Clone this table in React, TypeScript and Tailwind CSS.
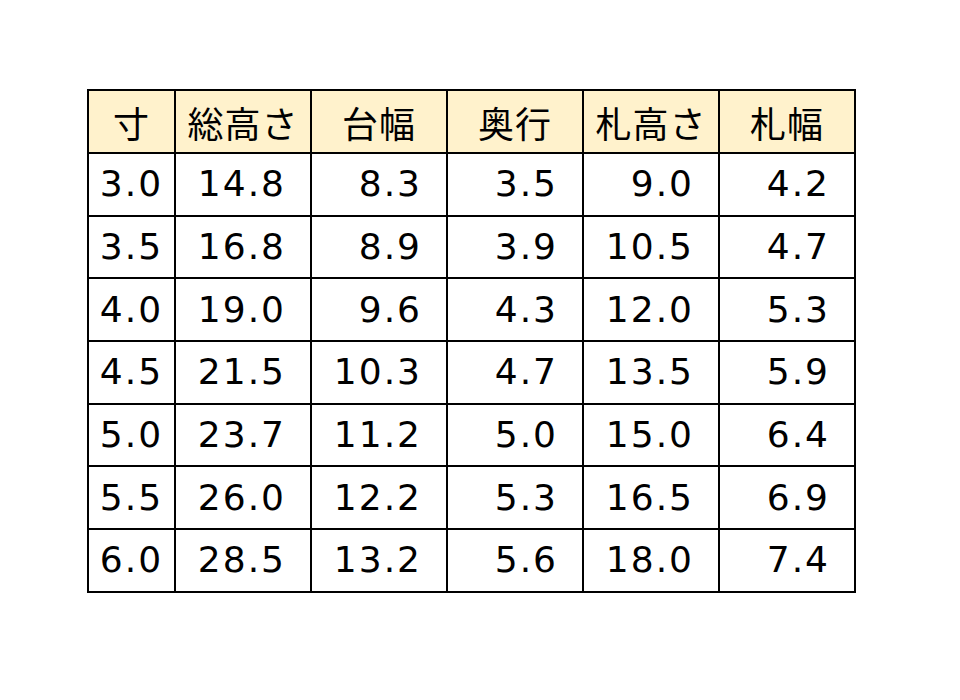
import React from 'react';

const headers = ['寸', '総高さ', '台幅', '奥行', '札高さ', '札幅'];

const rows = [
  ['3.0', '14.8', '8.3', '3.5', '9.0', '4.2'],
  ['3.5', '16.8', '8.9', '3.9', '10.5', '4.7'],
  ['4.0', '19.0', '9.6', '4.3', '12.0', '5.3'],
  ['4.5', '21.5', '10.3', '4.7', '13.5', '5.9'],
  ['5.0', '23.7', '11.2', '5.0', '15.0', '6.4'],
  ['5.5', '26.0', '12.2', '5.3', '16.5', '6.9'],
  ['6.0', '28.5', '13.2', '5.6', '18.0', '7.4'],
];

const App: React.FC = () => {
  return (
    <div
      className="w-[960px] h-[700px] bg-white pt-[89px] pl-[87px]"
      style={{ fontFamily: '"DejaVu Sans", "Noto Sans CJK JP", sans-serif' }}
    >
      <table className="table-fixed border-collapse w-[767px] text-[36px] text-black">
        <colgroup>
          <col className="w-[87px]" />
          <col className="w-[136px]" />
          <col className="w-[136px]" />
          <col className="w-[136px]" />
          <col className="w-[136px]" />
          <col className="w-[136px]" />
        </colgroup>
        <thead>
          <tr className="h-[63px] bg-[#fff2cc]">
            {headers.map((h, i) => (
              <th
                key={i}
                className="border-2 border-black font-normal text-center p-0 leading-none tracking-[1px]"
                style={{ fontFamily: '"Noto Sans CJK JP", sans-serif' }}
              >
                {h}
              </th>
            ))}
          </tr>
        </thead>
        <tbody>
          {rows.map((row, r) => (
            <tr key={r} className="h-[62.7px]">
              {row.map((v, i) => (
                <td
                  key={i}
                  className={
                    i === 0
                      ? 'border-2 border-black text-center p-0 leading-none tracking-[2px]'
                      : 'border-2 border-black text-right pr-[24px] leading-none tracking-[2px]'
                  }
                >
                  {v}
                </td>
              ))}
            </tr>
          ))}
        </tbody>
      </table>
    </div>
  );
};

export default App;
